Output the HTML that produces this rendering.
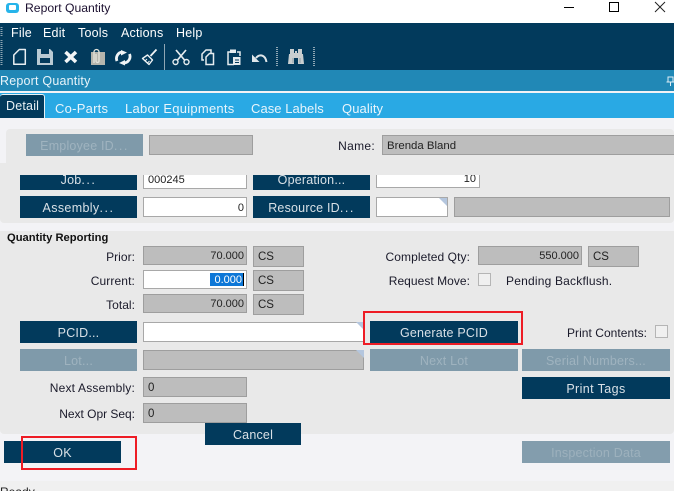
<!DOCTYPE html>
<html><head><meta charset="utf-8">
<style>
html,body{margin:0;padding:0;width:674px;height:491px;overflow:hidden;background:#f3f3f6}
body{position:relative;font-family:"Liberation Sans",sans-serif;font-size:12px;color:#111}
div{position:absolute;box-sizing:border-box;white-space:nowrap}
svg{position:absolute;overflow:visible}
.b{background:#023a5c;color:#d8e0e6;text-align:center;font-size:12.5px;line-height:24px;height:22px;letter-spacing:.2px}
.d{background:#7f9aaa;color:#9fb3bf;text-align:center;font-size:12.5px;line-height:24px;height:22px;letter-spacing:.2px;overflow:hidden}
.e{letter-spacing:1.5px}
.f{background:#bdbdbd;border:1px solid #9e9e9e;height:20px;line-height:20px;padding:0 4px;font-size:11.5px;color:#222}
.r{text-align:right;padding-right:2px;font-size:11px}
.i{background:#fff;border:1px solid #a8a8a8;height:20px;line-height:20px;padding:0 3px;font-size:11px;color:#222}
.l{text-align:right;height:16px;line-height:18px;font-size:12px;letter-spacing:.04px;color:#1a1a2a}
.m{color:#fff;font-size:12.5px;top:26px;line-height:14px;letter-spacing:.2px}
.t{color:#e8f5fc;font-size:13px;top:100px;line-height:17px;letter-spacing:.25px}
.c{background:#f0f0f0;border:1px solid #b5b5b5;width:13px;height:13px}
.red{border:2px solid #ee1c25}
.tri{width:0;height:0;border-top:8px solid #b4c6de;border-left:8px solid transparent}
</style></head><body>
<!-- title -->
<div style="left:0;top:0;width:674px;height:23px;background:#fff"></div>
<div style="left:6px;top:3px;width:13px;height:10px;background:#27b4ea;border-radius:3px"></div>
<div style="left:9px;top:5px;width:7px;height:5px;background:#fff;border-radius:1px"></div>
<div style="left:25px;top:1px;line-height:15px;font-size:12.2px;color:#1c1030">Report Quantity</div>
<svg style="left:0;top:0" width="674" height="23"><path d="M564 7.500h10" stroke="#000" stroke-width="1"/><rect x="609.500" y="2.500" width="9" height="9" fill="none" stroke="#000"/><path d="M655 2l10 10M665 2l-10 10" stroke="#222" stroke-width="1"/></svg>
<!-- dark bar -->
<div style="left:0;top:23px;width:674px;height:47px;background:#023a5c"></div>
<div class="m" style="left:11px">File</div>
<div class="m" style="left:43px">Edit</div>
<div class="m" style="left:78px">Tools</div>
<div class="m" style="left:121px">Actions</div>
<div class="m" style="left:176px">Help</div>
<svg style="left:0;top:0" width="674" height="70" fill="none">
<path d="M1.500 27v10M1.500 40v26" stroke="#8fa6b4" stroke-width="2" stroke-dasharray="1 1"/>
<!-- new -->
<path d="M13.800 55l5.500-5.500h6v14.700H13.800z" stroke="#e8eef2" stroke-width="1.500" stroke-linejoin="round"/>
<!-- save -->
<path d="M37 49h13l3 3v13H37z" fill="#b9cad4"/><rect x="41" y="49" width="8" height="5" fill="#023a5c"/><rect x="40" y="58" width="10" height="5" fill="#023a5c"/>
<!-- x -->
<path d="M65.500 52l10.500 10M76 52L65.500 62" stroke="#f2f5f7" stroke-width="3.600"/>
<!-- clip -->
<rect x="91" y="52" width="14" height="13" fill="#b5b5ad"/><path d="M94 63V52a2.500 2.500 0 0 1 5 0v9a1.500 1.500 0 0 1-3 0v-7" stroke="#e4e4dc" stroke-width="1.300"/>
<!-- refresh -->
<path d="M117 61a6.500 6.500 0 0 1 5-9M129.500 54a6.500 6.500 0 0 1-5 9" stroke="#f0f4f6" stroke-width="2.800"/><path d="M121 50l6 2.500-6 3zM125 65.500l-6-2.500 6-3z" fill="#f0f4f6"/>
<!-- broom -->
<path d="M142.500 58.500l5-3.500 5 5-3.500 4.500z" stroke="#eef2f4" stroke-width="1.400" stroke-linejoin="round"/><path d="M150.500 56l6-6.500" stroke="#eef2f4" stroke-width="1.800"/><path d="M145 61l2-2M147.500 63l2-2" stroke="#eef2f4"/>
<path d="M164.500 44v26" stroke="#8fa6b4"/>
<!-- scissors -->
<path d="M176 50l8.500 10M186 50l-8.500 10" stroke="#e6ecef" stroke-width="1.700"/><circle cx="175.500" cy="62" r="2.500" stroke="#e6ecef" stroke-width="1.400"/><circle cx="186.500" cy="62" r="2.500" stroke="#e6ecef" stroke-width="1.400"/>
<!-- copy -->
<path d="M204 60h-2v-6l4-4h5v3" stroke="#e6ecef" stroke-width="1.500"/><path d="M206 57l3.500-3.500h4V64.500H206z" stroke="#e6ecef" stroke-width="1.500"/>
<!-- paste -->
<path d="M231 52h-3v12.500h6M237 52h3v4" stroke="#e6ecef" stroke-width="1.500"/><rect x="230" y="49.500" width="6" height="3.500" fill="#e6ecef"/><path d="M233 57h7.500v8H233z" fill="#e6ecef"/><path d="M235 60h4M235 62.500h4" stroke="#023a5c"/>
<!-- undo -->
<path d="M256 58c3-4 9-4 10.500 4" stroke="#dfe6ea" stroke-width="2"/><path d="M252 54.500v7.500h7.500z" fill="#dfe6ea"/>
<path d="M277 47v20M314 47v20" stroke="#8fa6b4" stroke-width="2" stroke-dasharray="1 1"/>
<!-- binoculars -->
<path d="M290 49h4v4h1v-2h2v2h1v-4h4v5h1l1 10h-6v-6h-4v6h-6l1-10h1z" fill="#c8ced0"/><path d="M293 58v5M300 58v5" stroke="#8fa0a8"/>
</svg>
<!-- band -->
<div style="left:0;top:70px;width:674px;height:21px;background:#2188b6"></div>
<div style="left:0;top:74px;color:#e8f4fa;font-size:12.500px;line-height:15px;letter-spacing:.2px">Report Quantity</div>
<svg style="left:0;top:0" width="674" height="91" fill="none"><path d="M668 77h5v5h-5zM666.500 82h7.500M670.500 82v4" stroke="#dfeef5" stroke-width="1"/></svg>
<div style="left:0;top:91px;width:674px;height:2px;background:#f3f3f6"></div>
<!-- tabs -->
<div style="left:0;top:93px;width:674px;height:25px;background:#29a9e4"></div>
<div style="left:0;top:94px;width:45px;height:24px;background:#023a5c;border:1px solid #e8f2f7;border-bottom:0;border-radius:3px 3px 0 0;border-left:0"></div>
<div style="left:6px;top:99px;color:#e8f0f4;font-size:12.500px;line-height:15px;letter-spacing:.2px">Detail</div>
<div class="t" style="left:55px">Co-Parts</div>
<div class="t" style="left:125px">Labor Equipments</div>
<div class="t" style="left:251px;letter-spacing:.05px">Case Labels</div>
<div class="t" style="left:342px;letter-spacing:.1px">Quality</div>
<!-- job panel -->
<div style="left:0;top:163px;width:674px;height:60px;background:#e9e9e9;border-radius:0 0 4px 4px"></div>
<div class="b" style="left:20px;top:168px;width:117px">Job<span class="e">...</span></div>
<div class="i" style="left:143px;top:168px;width:104px;height:21px;padding-top:1px;padding-left:4px">000245</div>
<div class="b" style="left:253px;top:168px;width:117px">Operation...</div>
<div class="i" style="left:376px;top:168px;width:104px;text-align:right;padding-right:3px">10</div>
<div class="b" style="left:20px;top:196px;width:117px;letter-spacing:.35px">Assembly<span class="e">...</span></div>
<div class="i" style="left:143px;top:197px;width:104px;text-align:right;padding-right:2px">0</div>
<div class="b" style="left:253px;top:196px;width:117px">Resource ID<span class="e">...</span></div>
<div class="i" style="left:376px;top:197px;width:72px"></div>
<div class="tri" style="left:439px;top:198px"></div>
<div class="f" style="left:454px;top:197px;width:216px"></div>
<!-- employee panel -->
<div style="left:6px;top:129px;width:668px;height:46px;background:#e9e9e9;border-radius:4px"></div>
<div class="d" style="left:26px;top:134px;width:117px">Employee ID<span class="e">...</span></div>
<div class="f" style="left:149px;top:135px;width:104px"></div>
<div class="l" style="left:300px;top:137px;width:75px;letter-spacing:.3px">Name:</div>
<div class="f" style="left:382px;top:135px;width:292px;border-right:0;font-size:11.4px">Brenda Bland</div>
<!-- quantity panel -->
<div style="left:0;top:231px;width:674px;height:203px;background:#e9e9e9;border-radius:0 0 4px 4px"></div>
<div style="left:7px;top:231px;font-weight:bold;font-size:11.2px;line-height:15px;color:#111">Quantity Reporting</div>
<div class="l" style="left:40px;top:248px;width:95px">Prior:</div>
<div class="f r" style="left:143px;top:246px;width:104px;height:19px;line-height:19px">70.000</div>
<div class="f" style="left:253px;top:246px;width:51px;height:21px;line-height:21px">CS</div>
<div class="l" style="left:40px;top:272px;width:95px;letter-spacing:.12px">Current:</div>
<div class="i" style="left:143px;top:270px;width:104px;height:19px"></div>
<div style="left:210px;top:273px;width:34px;height:13px;background:#0d77d7;color:#fff;font-size:11px;line-height:14px;text-align:right;padding-right:1px;border-right:1px solid #000">0.000</div>
<div class="f" style="left:253px;top:270px;width:51px;height:21px;line-height:21px">CS</div>
<div class="l" style="left:40px;top:296px;width:95px">Total:</div>
<div class="f r" style="left:143px;top:294px;width:104px;height:19px;line-height:19px">70.000</div>
<div class="f" style="left:253px;top:294px;width:51px;height:21px;line-height:21px">CS</div>
<div class="l" style="left:360px;top:248px;width:110px;letter-spacing:.08px">Completed Qty:</div>
<div class="f r" style="left:478px;top:246px;width:104px;height:19px;line-height:19px">550.000</div>
<div class="f" style="left:588px;top:246px;width:51px;height:21px;line-height:21px">CS</div>
<div class="l" style="left:360px;top:272px;width:110px">Request Move:</div>
<div class="c" style="left:478px;top:273px"></div>
<div class="l" style="left:506px;top:272px;letter-spacing:.2px">Pending Backflush.</div>
<div class="b" style="left:20px;top:321px;width:117px">PCID...</div>
<div class="i" style="left:143px;top:322px;width:221px"></div>
<div class="tri" style="left:356px;top:322px"></div>
<div class="b" style="left:370px;top:321px;width:148px">Generate PCID</div>
<div class="red" style="left:363px;top:311px;width:160px;height:34px"></div>
<div class="l" style="left:540px;top:324px;width:107px">Print Contents:</div>
<div class="c" style="left:655px;top:325px"></div>
<div class="d" style="left:20px;top:349px;width:117px">Lot...</div>
<div class="f" style="left:143px;top:350px;width:221px"></div>
<div class="tri" style="left:356px;top:350px"></div>
<div class="d" style="left:370px;top:349px;width:148px">Next Lot</div>
<div class="d" style="left:522px;top:349px;width:148px">Serial Numbers...</div>
<div class="b" style="left:522px;top:377px;width:148px;letter-spacing:.4px">Print Tags</div>
<div class="l" style="left:20px;top:379px;width:115px;letter-spacing:.18px">Next Assembly:</div>
<div class="f" style="left:143px;top:377px;width:104px">0</div>
<div class="l" style="left:20px;top:405px;width:115px;letter-spacing:-.02px">Next Opr Seq:</div>
<div class="f" style="left:143px;top:403px;width:104px">0</div>
<div class="b" style="left:205px;top:423px;width:96px">Cancel</div>
<div class="b" style="left:4px;top:441px;width:117px">OK</div>
<div class="red" style="left:21px;top:436px;width:116px;height:34px"></div>
<div class="d" style="left:522px;top:441px;width:148px;background:#839dad;color:#9db1bd">Inspection Data</div>
<!-- status -->
<div style="left:0;top:481px;width:674px;height:10px;background:#f0f0f0;overflow:hidden"><div style="left:0;top:4px;font-size:12px;line-height:14px;color:#222">Ready</div></div>
</body></html>
